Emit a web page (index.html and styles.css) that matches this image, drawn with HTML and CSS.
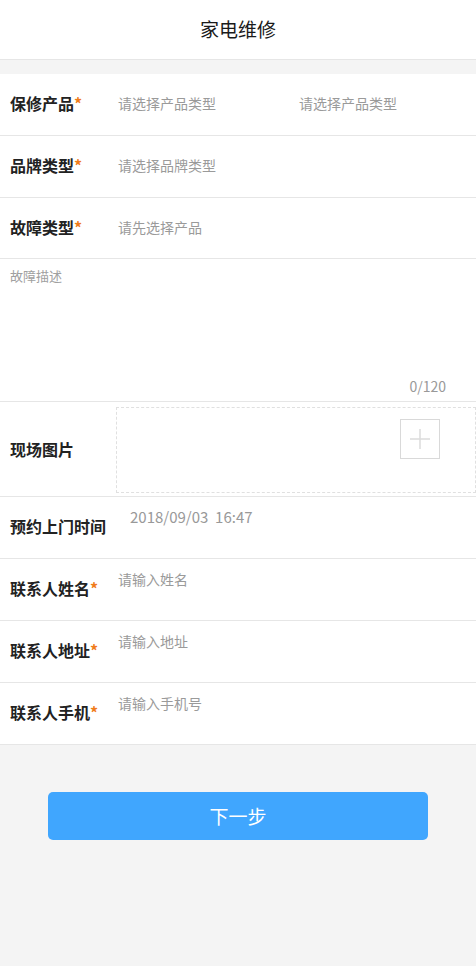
FILE: index.html
```html
<!DOCTYPE html>
<html lang="zh">
<head>
<meta charset="utf-8">
<title>家电维修</title>
<link rel="stylesheet" href="styles.css">
</head>
<body>
<div class="page">
  <header class="topbar">家电维修</header>
  <div class="gap"></div>
  <section class="form">
    <div class="row">
      <div class="label">保修产品<span class="req">*</span></div>
      <div class="selects">
        <span class="ph">请选择产品类型</span>
        <span class="ph">请选择产品类型</span>
      </div>
    </div>
    <div class="row">
      <div class="label">品牌类型<span class="req">*</span></div>
      <span class="ph">请选择品牌类型</span>
    </div>
    <div class="row row-short">
      <div class="label">故障类型<span class="req">*</span></div>
      <span class="ph">请先选择产品</span>
    </div>
    <div class="desc">
      <div class="desc-ph">故障描述</div>
      <div class="count">0/120</div>
    </div>
    <div class="row row-upload">
      <div class="label">现场图片</div>
      <div class="upload">
        <div class="addbox">
          <svg width="20" height="20" viewBox="0 0 20 20"><path d="M10 0V20M0 10H20" stroke="#dcdcdc" stroke-width="1.5" fill="none"/></svg>
        </div>
      </div>
    </div>
    <div class="row row-top">
      <div class="label">预约上门时间</div>
      <span class="date">2018/09/03&nbsp;&nbsp;16:47</span>
    </div>
    <div class="row row-top">
      <div class="label">联系人姓名<span class="req">*</span></div>
      <span class="ph top">请输入姓名</span>
    </div>
    <div class="row row-top">
      <div class="label">联系人地址<span class="req">*</span></div>
      <span class="ph top">请输入地址</span>
    </div>
    <div class="row row-top">
      <div class="label">联系人手机<span class="req">*</span></div>
      <span class="ph top">请输入手机号</span>
    </div>
  </section>
  <div class="actions">
    <button class="next">下一步</button>
  </div>
</div>
</body>
</html>
```
FILE: styles.css
```css
* { box-sizing: border-box; }
html, body { margin: 0; padding: 0; }
body {
  background: #f4f4f4;
  font-family: "Noto Sans CJK SC", "Noto Sans", sans-serif;
  color: #222;
}
.page { width: 476px; min-height: 966px; background: #f4f4f4; }
.topbar {
  height: 60px;
  background: #fff;
  border-bottom: 1px solid #e6e6e6;
  display: flex;
  align-items: center;
  justify-content: center;
  font-size: 19px;
  color: #1a1a1a;
  padding-bottom: 2px;
}
.gap { height: 14px; }
.form { background: #fff; }
.row {
  height: 62px;
  border-bottom: 1px solid #e6e6e6;
  display: flex;
  align-items: center;
  padding-left: 10px;
  padding-bottom: 3px;
}
.row-short { height: 61px; }
.label {
  width: 108px;
  flex: none;
  font-size: 16px;
  font-weight: bold;
  color: #222;
  white-space: nowrap;
}
.req { color: #f07c1c; font-weight: bold; }
.selects { display: grid; grid-template-columns: 181px 1fr; flex: 1; }
.ph { font-size: 14px; color: #9a9a9a; }
.desc {
  height: 143px;
  border-bottom: 1px solid #e6e6e6;
  padding: 7px 30px 5px 10px;
  display: flex;
  flex-direction: column;
  justify-content: space-between;
}
.desc-ph { font-size: 13px; color: #a0a0a0; }
.count { align-self: flex-end; font-size: 14px; color: #999; }
.row-upload { height: 95px; align-items: center; padding-bottom: 0; }
.upload {
  flex: 1;
  align-self: stretch;
  margin: 5px 0 3px -2px;
  border: 1px dashed #e0e0e0;
  display: flex;
  justify-content: flex-end;
  padding: 11px 35px 0 0;
}
.addbox {
  width: 40px;
  height: 40px;
  border: 1px solid #d9d9d9;
  display: flex;
  align-items: center;
  justify-content: center;
}
.row-top .ph.top { align-self: flex-start; margin-top: 10px; }
.date {
  align-self: flex-start;
  margin-top: 9px;
  margin-left: 12px;
  font-size: 15px;
  color: #999;
}
.actions { padding: 47px 48px; }
.next {
  display: block;
  width: 380px;
  height: 48px;
  border: none;
  border-radius: 5px;
  background: #40a6fe;
  color: #fff;
  font-family: "Noto Sans CJK SC", sans-serif;
  font-size: 19px;
  padding-bottom: 2px;
}
```
